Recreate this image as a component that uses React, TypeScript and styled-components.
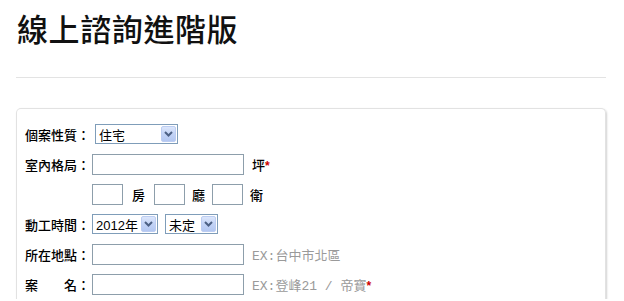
import React from "react";
import styled, { createGlobalStyle } from "styled-components";

const GlobalStyle = createGlobalStyle`
  html, body {
    margin: 0;
    padding: 0;
    background: #ffffff;
  }
  body {
    font-family: "Noto Sans CJK TC", "Liberation Sans", sans-serif;
    color: #000;
  }
`;

const Page = styled.div`
  padding: 0 18px 0 16px;
`;

const Title = styled.h1`
  margin: 0;
  padding: 8px 0 0 1px;
  height: 44px;
  font-size: 31px;
  line-height: 40px;
  font-weight: 500;
  letter-spacing: 0.6px;
  color: #111;
`;

const Divider = styled.hr`
  margin: 25px 0 0;
  border: 0;
  border-top: 1px solid #e3e3e3;
`;

const Card = styled.div`
  margin-top: 30px;
  border: 1px solid #e2e2e2;
  border-bottom: 0;
  border-radius: 5px 5px 0 0;
  box-shadow: 1px 1px 2px rgba(0, 0, 0, 0.18);
  padding: 10px 8px 0;
`;

const Row = styled.div`
  display: flex;
  align-items: center;
  height: 30px;
`;

const Label = styled.span`
  width: 67px;
  flex: none;
  font-size: 13px;
  font-weight: 500;
  white-space: pre;
`;

const TextInput = styled.input<{ $w?: number }>`
  box-sizing: border-box;
  width: ${(p) => p.$w ?? 152}px;
  height: 21px;
  margin: 0;
  padding: 1px 3px;
  border: 1px solid #8d9eab;
  background: #fff;
  font-size: 12px;
  outline: none;
`;

const Unit = styled.span<{ $gap?: number }>`
  font-size: 13px;
  font-weight: 500;
  margin: 0 ${(p) => p.$gap ?? 9}px;
`;

const Required = styled.span`
  color: #cc0000;
  font-family: "Liberation Sans", sans-serif;
  font-size: 12px;
  font-weight: bold;
`;

const Hint = styled.span`
  margin-left: 8px;
  color: #9a9a9a;
  font-family: "Liberation Mono", "Noto Sans CJK TC", monospace;
  font-size: 13px;
`;

const SelectBox = styled.div<{ $w: number; $ml?: number }>`
  position: relative;
  box-sizing: border-box;
  width: ${(p) => p.$w}px;
  height: 20px;
  margin-left: ${(p) => p.$ml ?? 0}px;
  margin-right: 7px;
  border: 1px solid #7f9db9;
  background: #fff;
  display: flex;
  align-items: center;
  padding-left: 3px;
  font-family: "Liberation Sans", "Noto Sans CJK TC", sans-serif;
  font-size: 13px;
`;

const DropButton = styled.span`
  position: absolute;
  top: 1px;
  right: 1px;
  width: 15px;
  height: 16px;
  box-sizing: border-box;
  border: 1px solid #bccdf2;
  border-radius: 2px;
  background: linear-gradient(180deg, #dce6fb 0%, #c2d3f6 50%, #b3c7f1 100%);
  display: flex;
  align-items: center;
  justify-content: center;
`;

const Chevron = () => (
  <svg width="9" height="6" viewBox="0 0 9 6">
    <path d="M1 1 L4.5 4.5 L8 1" fill="none" stroke="#4d6185" strokeWidth="2" />
  </svg>
);

const Select: React.FC<{ value: string; w: number; ml?: number }> = ({ value, w, ml }) => (
  <SelectBox $w={w} $ml={ml}>
    {value}
    <DropButton>
      <Chevron />
    </DropButton>
  </SelectBox>
);

const App: React.FC = () => {
  return (
    <Page>
      <GlobalStyle />
      <Title>線上諮詢進階版</Title>
      <Divider />
      <Card>
        <Row>
          <Label>個案性質：</Label>
          <Select value="住宅" w={83} ml={3} />
        </Row>
        <Row>
          <Label>室內格局：</Label>
          <TextInput />
          <Unit $gap={8}>
            坪<Required>*</Required>
          </Unit>
        </Row>
        <Row>
          <Label></Label>
          <TextInput $w={31} />
          <Unit>房</Unit>
          <TextInput $w={31} />
          <Unit $gap={7}>廳</Unit>
          <TextInput $w={31} />
          <Unit $gap={7}>衛</Unit>
        </Row>
        <Row>
          <Label>動工時間：</Label>
          <Select value="2012年" w={66} />
          <Select value="未定" w={53} />
        </Row>
        <Row>
          <Label>所在地點：</Label>
          <TextInput />
          <Hint>EX:台中市北區</Hint>
        </Row>
        <Row>
          <Label>{"案　　名："}</Label>
          <TextInput />
          <Hint>
            EX:登峰21 / 帝寶<Required>*</Required>
          </Hint>
        </Row>
      </Card>
    </Page>
  );
};

export default App;
